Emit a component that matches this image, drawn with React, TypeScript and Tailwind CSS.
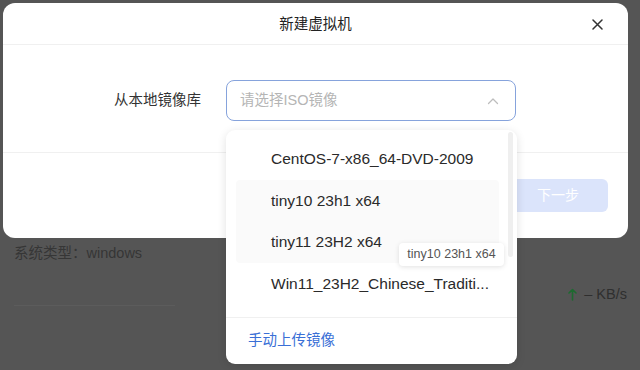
import React from "react";

const font = { fontFamily: '"Liberation Sans", "Noto Sans CJK SC", sans-serif' };

export default function App() {
  return (
    <div
      className="relative w-[640px] h-[370px] overflow-hidden bg-[#555555]"
      style={font}
    >
      {/* background page (dimmed) */}
      <div className="pt-[242px] pl-[14px] text-[14.5px] text-[#363636]">
        <div className="leading-[22px]">系统类型：windows</div>
        <div className="mt-[29px] flex items-start">
          <div className="w-[161px] border-b border-[#5c5c5c] h-[13px]" />
          <div className="ml-auto mr-[13px] -mt-[9px] flex items-center gap-[7px] text-[14.5px] text-[#2f2f2f]">
            <svg width="9" height="13" viewBox="0 0 9 13">
              <path d="M4.5 12V1.5M1 5L4.5 1.5L8 5" stroke="#1d6a30" strokeWidth="1.6" fill="none" strokeLinecap="round" strokeLinejoin="round" />
            </svg>
            <span>– KB/s</span>
          </div>
        </div>
      </div>

      {/* modal */}
      <div className="absolute top-[3px] left-[3px] w-[625px] h-[235px] rounded-[12px] bg-white flex flex-col">
        <div className="relative h-[42px] border-b border-[#f0f0f0] flex items-center justify-center">
          <span className="text-[14.5px] text-[#222] pt-[2px]">新建虚拟机</span>
          <svg
            className="absolute right-[25px] top-[16px]"
            width="11"
            height="11"
            viewBox="0 0 11 11"
          >
            <path d="M1 1L10 10M10 1L1 10" stroke="#333" strokeWidth="1.5" strokeLinecap="round" />
          </svg>
        </div>
        <div className="h-[108px] border-b border-[#f0f0f0] pt-[35px]">
          <div className="flex items-center">
            <div className="w-[198px] text-right text-[14.5px] text-[#333]">从本地镜像库</div>
            <div className="relative ml-[25px] w-[290px] h-[41px] rounded-[8px] border border-[#86a3dc] flex items-center pl-[13px] pr-[16px]">
              <span className="text-[14.5px] text-[#b5b5b5]">请选择ISO镜像</span>
              <svg className="ml-auto" width="12" height="8" viewBox="0 0 12 8">
                <path d="M1.5 6.5L6 2L10.5 6.5" stroke="#bdbdbd" strokeWidth="1.3" fill="none" strokeLinecap="round" strokeLinejoin="round" />
              </svg>

              {/* dropdown */}
              <div className="absolute left-[-1px] top-[49px] w-[291px] h-[234px] rounded-[9px] bg-white shadow-[0_2px_10px_rgba(0,0,0,0.12)] z-10 flex flex-col">
                <div className="relative h-[187px] pt-[8px] px-[10px]">
                  <div className="h-[42px] flex items-center pl-[35px] text-[15.5px] text-[#2a2a2a]">
                    CentOS-7-x86_64-DVD-2009
                  </div>
                  <div className="w-[263px] rounded-[4px] bg-[#fafafa]">
                    <div className="h-[41px] flex items-center pl-[35px] text-[15.5px] text-[#2a2a2a]">
                      tiny10 23h1 x64
                    </div>
                    <div className="h-[42px] flex items-center pl-[35px] text-[15.5px] text-[#2a2a2a]">
                      tiny11 23H2 x64
                    </div>
                  </div>
                  <div className="h-[41px] flex items-center pl-[35px] text-[15.5px] text-[#2a2a2a]">
                    Win11_23H2_Chinese_Traditi...
                  </div>
                  <div className="absolute left-[282px] top-[2px] w-[5px] h-[125px] rounded-full bg-[#efefef]" />
                  <div className="absolute left-[173px] top-[113px] w-[105px] h-[23px] rounded-[4px] bg-white shadow-[0_1px_5px_rgba(0,0,0,0.12)] flex items-center justify-center text-[12.5px] text-[#555]">
                    tiny10 23h1 x64
                  </div>
                </div>
                <div className="flex-1 border-t border-[#f0f0f0] flex items-center pl-[22px] text-[14.5px] text-[#3a6fd6]">
                  手动上传镜像
                </div>
              </div>
            </div>
          </div>
        </div>
        <div className="flex justify-end pt-[26px] pr-[20px]">
          <div className="w-[100px] h-[33px] rounded-[6px] bg-[#dbe4fb] flex items-center justify-center text-[14px] text-white">
            下一步
          </div>
        </div>
      </div>
    </div>
  );
}
